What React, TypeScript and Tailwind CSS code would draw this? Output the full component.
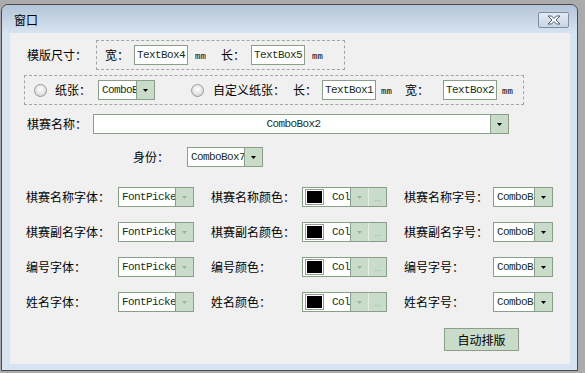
import React from "react";

const cn = "font-[family-name:Noto_Sans_CJK_SC,sans-serif] text-[12px] leading-none text-black whitespace-nowrap";
const mono = "font-[family-name:Liberation_Mono,monospace] text-[11px] tracking-[-0.6px] leading-none text-[#15301a] whitespace-nowrap";

function Arrow({ gray }: { gray?: boolean }) {
  return (
    <svg width="5" height="3" viewBox="0 0 5 3">
      <polygon points="0,0 5,0 2.5,3" fill={gray ? "#a3aca3" : "#000"} />
    </svg>
  );
}

function TextBox({ text }: { text: string }) {
  return (
    <div className="w-[54px] h-[20px] border border-[#8a9e8a] bg-white flex items-center justify-center overflow-hidden">
      <span className={mono}>{text}</span>
    </div>
  );
}

function Combo({ text, w, gray, center }: { text: string; w: string; gray?: boolean; center?: boolean }) {
  return (
    <div className={`${w} h-[20px] border border-[#8a9e8a] bg-white flex`}>
      <div className={`flex-1 flex items-center overflow-hidden pl-[3px] ${center ? "justify-center" : ""}`}>
        <span className={mono}>{text}</span>
      </div>
      <div className="w-[18px] h-full bg-[#c9dbc9] border-l border-[#8a9e8a] flex items-center justify-center">
        <Arrow gray={gray} />
      </div>
    </div>
  );
}

function ColorPicker() {
  return (
    <div className="w-[85px] h-[20px] border border-[#8a9e8a] bg-white flex">
      <div className="w-[47px] flex items-center pl-[2px] overflow-hidden">
        <div className="w-[19px] h-[16px] shrink-0 border border-[#9a9a9a] bg-white p-[1px]">
          <div className="w-full h-full bg-black" />
        </div>
        <span className={`${mono} ml-[8px]`}>Col</span>
      </div>
      <div className="w-[18px] h-full bg-[#c9dbc9] border-l border-[#8a9e8a] flex items-center justify-center">
        <Arrow gray />
      </div>
      <div className="flex-1 h-full bg-[#c9dbc9] border-l border-[#e6eee6] flex items-end justify-center pb-[3px]">
        <span className="font-[family-name:Liberation_Sans,sans-serif] text-[8px] leading-none text-[#9aa59a]">...</span>
      </div>
    </div>
  );
}

function Radio() {
  return (
    <div className="w-[13px] h-[13px] rounded-full border border-[#9a9a9a] bg-[radial-gradient(circle_at_50%_40%,#ffffff_0%,#e4e4e4_55%,#c4c4c4_100%)]" />
  );
}

function Mm() {
  return <span className="font-[family-name:Liberation_Mono,monospace] text-[9px] leading-none text-black mt-[4px]">mm</span>;
}

const rows = [
  ["棋赛名称字体：", "棋赛名称颜色：", "棋赛名称字号："],
  ["棋赛副名字体：", "棋赛副名颜色：", "棋赛副名字号："],
  ["编号字体：", "编号颜色：", "编号字号："],
  ["姓名字体：", "姓名颜色：", "姓名字号："],
];

export default function App() {
  return (
    <div className="w-[585px] h-[373px] bg-[#ababab] pt-[4px] pl-[1px] overflow-hidden">
      <div className="w-[577px] h-[367px] border border-[#4a4a4a] rounded-t-[7px] overflow-hidden flex flex-col">
        <div className="h-[28px] shrink-0 bg-[linear-gradient(to_bottom,#b4c5d8,#d7e3f0)] flex items-center justify-between pl-[12px] pr-[8px]">
          <span className={`${cn} text-[#1b2b3b] mt-[1px]`}>窗口</span>
          <div className="w-[31px] h-[16px] mt-[2px] border border-[#7d8ea3] rounded-[2px] bg-[linear-gradient(to_bottom,#e4ebf3,#c9d5e3)] flex items-center justify-center">
            <svg width="14" height="10" viewBox="0 0 14 10">
              <polygon
                points="1,1 4.5,1 7,3.5 9.5,1 13,1 9,5 13,9 9.5,9 7,6.5 4.5,9 1,9 5,5"
                fill="#ffffff"
                stroke="#4f5d6d"
                strokeWidth="1"
                strokeLinejoin="round"
              />
            </svg>
          </div>
        </div>
        <div className="flex-1 bg-[#d6e3f1] pl-[8px] pr-[7px] pb-[6px] flex">
          <div className="w-[560px] h-full bg-[#f0f0f0] pt-[7px] flex flex-col">
            <div className="flex items-center h-[30px]">
              <span className={`${cn} ml-[17px] w-[69px]`}>模版尺寸：</span>
              <div className="w-[249px] h-[30px] border border-dashed border-[#a4a4a4] flex items-center pl-[8px]">
                <span className={`${cn} w-[29px]`}>宽：</span>
                <TextBox text="TextBox4" />
                <span className="ml-[7px] w-[26px] flex"><Mm /></span>
                <span className={`${cn} w-[30px]`}>长：</span>
                <TextBox text="TextBox5" />
                <span className="ml-[7px] flex"><Mm /></span>
              </div>
            </div>
            <div className="mt-[5px] ml-[14px] w-[500px] h-[30px] border border-dashed border-[#a4a4a4] flex items-center">
              <div className="ml-[9px]"><Radio /></div>
              <span className={`${cn} ml-[8px] w-[43px]`}>纸张：</span>
              <Combo text="ComboB" w="w-[57px]" />
              <div className="ml-[36px]"><Radio /></div>
              <span className={`${cn} ml-[9px] w-[80px]`}>自定义纸张：</span>
              <span className={`${cn} w-[29px]`}>长：</span>
              <TextBox text="TextBox1" />
              <span className="ml-[5px] w-[24px] flex"><Mm /></span>
              <span className={`${cn} w-[38px]`}>宽：</span>
              <TextBox text="TextBox2" />
              <span className="ml-[5px] flex"><Mm /></span>
            </div>
            <div className="mt-[9px] flex items-center h-[20px]">
              <span className={`${cn} ml-[17px] w-[66px]`}>棋赛名称：</span>
              <Combo text="ComboBox2" w="w-[416px]" center />
            </div>
            <div className="mt-[13px] flex items-center h-[20px]">
              <span className={`${cn} ml-[123px] w-[54px]`}>身份：</span>
              <Combo text="ComboBox7" w="w-[76px]" />
            </div>
            <div className="mt-[20px] flex flex-col gap-[15px]">
              {rows.map((r) => (
                <div key={r[0]} className="flex items-center h-[20px]">
                  <span className={`${cn} ml-[16px] w-[92px]`}>{r[0]}</span>
                  <Combo text="FontPicke" w="w-[76px]" gray />
                  <span className={`${cn} ml-[17px] w-[91px]`}>{r[1]}</span>
                  <ColorPicker />
                  <span className={`${cn} ml-[17px] w-[89px]`}>{r[2]}</span>
                  <Combo text="ComboB" w="w-[60px]" />
                </div>
              ))}
            </div>
            <div className="mt-[16px] ml-[434px] w-[75px] h-[23px] border border-[#8a9e8a] bg-[#c9dbc9] flex items-center justify-center">
              <span className={cn}>自动排版</span>
            </div>
          </div>
        </div>
      </div>
    </div>
  );
}
